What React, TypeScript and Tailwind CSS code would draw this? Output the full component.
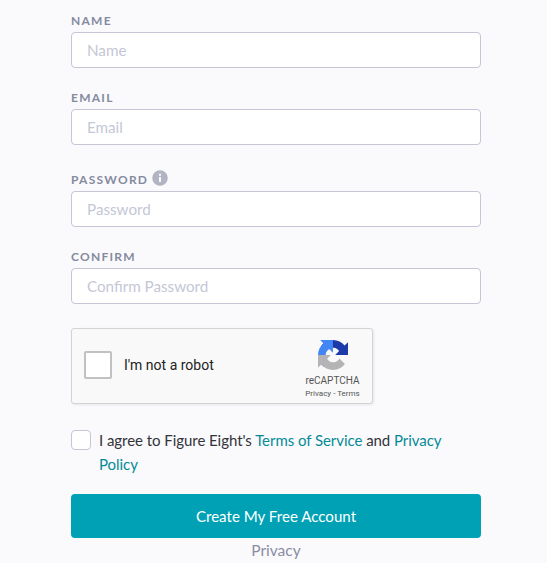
import React, { useState } from 'react'

interface FieldProps {
  label: string
  placeholder: string
  type?: string
  value: string
  onChange: (value: string) => void
  hint?: React.ReactNode
  className?: string
}

const InfoIcon = () => (
  <svg className="mb-[5px] h-4 w-4" viewBox="0 0 16 16">
    <circle cx="8" cy="8" r="7.75" fill="#b2b4c3" />
    <path d="M7 3.8h2v2H7zM7 7h2v5H7z" fill="#fafafc" />
  </svg>
)

const RecaptchaLogo = () => (
  <svg className="h-[30px] w-[30px]" viewBox="0 0 64 64">
    <path
      fill="#1c3aa9"
      d="M64 31.955l-.033-1.37V4.687l-7.16 7.16C50.948 4.674 42.033.093 32.05.093c-10.4 0-19.622 4.96-25.458 12.64l11.736 11.86a15.55 15.55 0 0 1 4.754-5.334c2.05-1.6 4.952-2.906 8.968-2.906.485 0 .86.057 1.135.163 4.976.393 9.288 3.14 11.828 7.124l-8.307 8.307L64 31.953"
    />
    <path
      fill="#4285f4"
      d="M31.862.094l-1.37.033H4.594l7.16 7.16C4.58 13.147 0 22.06 0 32.046c0 10.4 4.96 19.622 12.64 25.458L24.5 45.768a15.55 15.55 0 0 1-5.334-4.754c-1.6-2.05-2.906-4.952-2.906-8.968 0-.485.057-.86.163-1.135.393-4.976 3.14-9.288 7.124-11.828l8.307 8.307L31.86.095"
    />
    <path
      fill="#b4b4b4"
      d="M.001 32.045l.033 1.37v25.898l7.16-7.16c5.86 7.173 14.774 11.754 24.76 11.754 10.4 0 19.622-4.96 25.458-12.64l-11.736-11.86a15.55 15.55 0 0 1-4.754 5.334c-2.05 1.6-4.952 2.906-8.968 2.906-.485 0-.86-.057-1.135-.163-4.976-.393-9.288-3.14-11.828-7.124l8.307-8.307c-10.522.04-22.4.066-27.295-.005"
    />
  </svg>
)

const Field: React.FC<FieldProps> = ({
  label,
  placeholder,
  type = 'text',
  value,
  onChange,
  hint,
  className,
}) => (
  <label className={`block ${className || ''}`}>
    <span className="flex h-6 items-center gap-1 pt-0.5 text-[12px] leading-[22px] font-bold tracking-[1.25px] text-[#858a9f] uppercase">
      {label}
      {hint}
    </span>
    <input
      type={type}
      value={value}
      onChange={(e) => onChange(e.target.value)}
      placeholder={placeholder}
      className="block h-9 w-full rounded border border-[#c5c6d6] bg-white px-[15px] text-[15.2px] text-[#33333a] outline-none placeholder:text-[#c4c7d6]"
    />
  </label>
)

const Recaptcha: React.FC = () => {
  const [checked, setChecked] = useState(false)

  return (
    <div className="flex h-[76px] w-[302px] rounded-[3px] border border-[#d3d3d3] bg-[#f9f9f9] font-[Roboto,sans-serif] shadow-[1px_1px_3px_0_rgba(0,0,0,0.08)]">
      <label className="flex flex-1 items-center gap-3 pb-0.5 pl-3 text-[14px] text-[#222]">
        <input
          type="checkbox"
          checked={checked}
          onChange={() => setChecked(!checked)}
          className="h-7 w-7 appearance-none rounded-xs border-2 border-[#c1c1c1] bg-white checked:bg-[#4285f4]"
        />
        I'm not a robot
      </label>
      <div className="flex w-[79px] flex-col items-center pt-[11px] text-[#555]">
        <RecaptchaLogo />
        <span className="mt-[5px] text-[10px] leading-[12px]">reCAPTCHA</span>
        <span className="mt-px text-[8px] leading-[11px]">Privacy - Terms</span>
      </div>
    </div>
  )
}

export default function App() {
  const [name, setName] = useState('')
  const [email, setEmail] = useState('')
  const [password, setPassword] = useState('')
  const [confirm, setConfirm] = useState('')
  const [agreed, setAgreed] = useState(false)

  return (
    <div className="h-[563px] overflow-hidden bg-[#fafafc] pl-[71px] font-[Lato,sans-serif] text-[#33333a]">
      <form className="w-[410px]" onSubmit={(e) => e.preventDefault()}>
        {/* Bottom edge of the card above */}
        <div className="h-0 shadow-[0_0_4px_0_rgba(0,0,0,0.15)]" />

        <Field label="Name" placeholder="Name" value={name} onChange={setName} className="pt-2" />
        <Field
          label="Email"
          placeholder="Email"
          type="email"
          value={email}
          onChange={setEmail}
          className="pt-[17px]"
        />
        <Field
          label="Password"
          placeholder="Password"
          type="password"
          value={password}
          onChange={setPassword}
          hint={<InfoIcon />}
          className="pt-[22px]"
        />
        <Field
          label="Confirm"
          placeholder="Confirm Password"
          type="password"
          value={confirm}
          onChange={setConfirm}
          className="pt-[17px]"
        />

        <div className="pt-6">
          <Recaptcha />
        </div>

        <label className="mt-6 flex gap-2 text-[15px] leading-6 tracking-[-0.05px]">
          <input
            type="checkbox"
            checked={agreed}
            onChange={() => setAgreed(!agreed)}
            className="mt-0.5 h-5 w-5 shrink-0 appearance-none rounded border border-[#c5c6d6] bg-white checked:bg-[#00a1b5]"
          />
          <span>
            I agree to Figure Eight's{' '}
            <a href="#terms" className="text-[#058a97]">
              Terms of Service
            </a>{' '}
            and{' '}
            <a href="#privacy" className="text-[#058a97]">
              Privacy Policy
            </a>
          </span>
        </label>

        <button
          type="submit"
          className="mt-[18px] block h-11 w-full rounded bg-[#00a1b5] text-[15.1px] text-white"
        >
          Create My Free Account
        </button>
        <a href="#privacy" className="block text-center text-[15.5px] leading-6 text-[#8a8ca3]">
          Privacy
        </a>
      </form>
    </div>
  )
}
